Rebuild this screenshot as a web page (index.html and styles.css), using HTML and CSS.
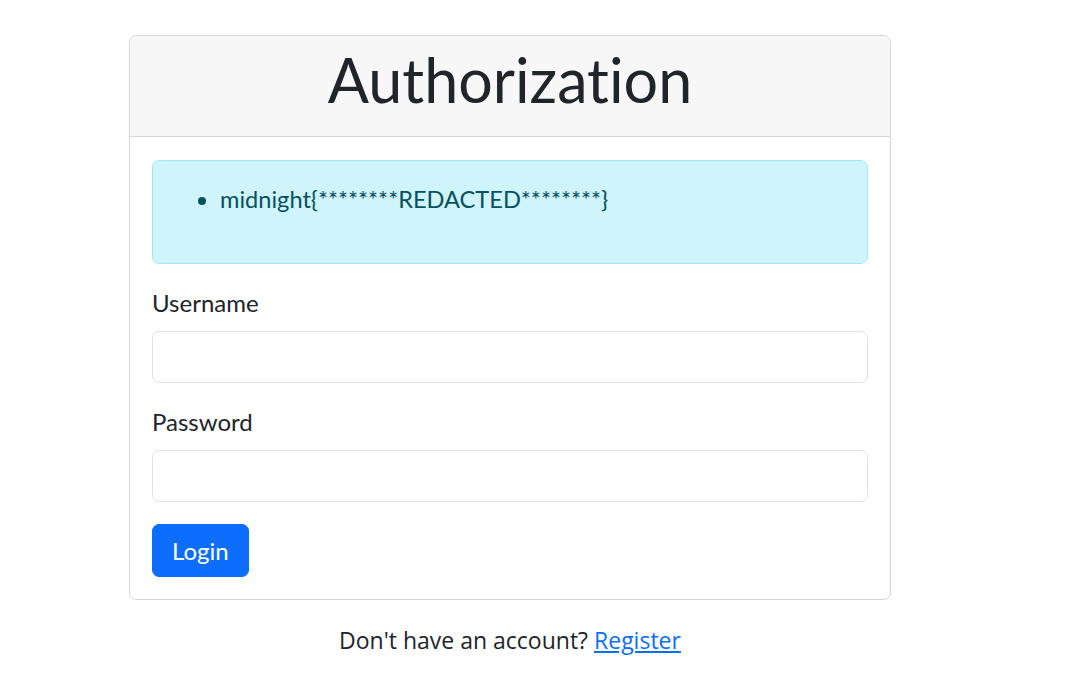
FILE: index.html
```html
<!DOCTYPE html>
<html lang="en">
<head>
<meta charset="utf-8">
<title>Authorization</title>
<link rel="stylesheet" href="styles.css">
</head>
<body>
<main class="page">
  <section class="card">
    <header class="card-header">
      <h1 class="title">Authorization</h1>
    </header>
    <div class="card-body">
      <div class="alert">
        <ul class="alert-list">
          <li>midnight{********REDACTED********}</li>
        </ul>
      </div>
      <form class="form">
        <div class="field">
          <label class="label" for="username">Username</label>
          <input class="input" id="username" type="text">
        </div>
        <div class="field field-last">
          <label class="label" for="password">Password</label>
          <input class="input" id="password" type="password">
        </div>
        <button class="btn" type="button">Login</button>
      </form>
    </div>
  </section>
  <p class="footer">Don't have an account? <a class="link" href="#">Register</a></p>
</main>
</body>
</html>
```

FILE: styles.css
```css
* { box-sizing: border-box; }

html, body {
  margin: 0;
  padding: 0;
  background: #fff;
}

body {
  font-family: Lato, "Open Sans", sans-serif;
  color: #212529;
  font-variant-ligatures: none;
}

.page {
  width: 762px;
  margin-left: 129px;
  padding-top: 35px;
}

.card {
  border: 1px solid #d6d6d6;
  border-radius: 7px;
  overflow: hidden;
}

.card-header {
  background: #f7f7f7;
  border-bottom: 1px solid #d6d6d6;
  padding: 8px 16px 21px;
  text-align: center;
}

.title {
  margin: 0;
  font-size: 61px;
  font-weight: 400;
  line-height: 71px;
  color: #212529;
  font-variant-ligatures: none;
}

.card-body {
  padding: 23px 22px 22px;
}

.alert {
  background: #cff4fc;
  border: 1px solid #9eeaf9;
  border-radius: 7px;
  color: #055160;
  padding: 20px 20px;
  margin-bottom: 21px;
}

.alert-list {
  margin: 0 0 26px;
  padding-left: 47px;
  font-size: 23.6px;
  line-height: 36px;
}

.form {
  display: flex;
  flex-direction: column;
  align-items: flex-start;
}

.field {
  width: 100%;
  display: flex;
  flex-direction: column;
  margin-bottom: 21px;
}

.field-last {
  margin-bottom: 22px;
}

.label {
  font-size: 24px;
  line-height: 36px;
  margin-bottom: 10px;
}

.input {
  height: 52px;
  width: 100%;
  border: 1px solid #dee2e6;
  border-radius: 7px;
  background: #fff;
  font: inherit;
  padding: 0 15px;
}

.btn {
  background: #0d6efd;
  border: 1px solid #0d6efd;
  border-radius: 7px;
  color: #fff;
  font-family: Lato, "Open Sans", sans-serif;
  font-size: 24px;
  line-height: 36px;
  padding: 7.5px 19px;
  cursor: pointer;
}

.footer {
  margin: 23px 0 0;
  text-align: center;
  font-family: "Open Sans", sans-serif;
  font-size: 23px;
  line-height: 34px;
  color: #212529;
}

.link {
  color: #0d6efd;
  text-decoration: underline;
}
```
